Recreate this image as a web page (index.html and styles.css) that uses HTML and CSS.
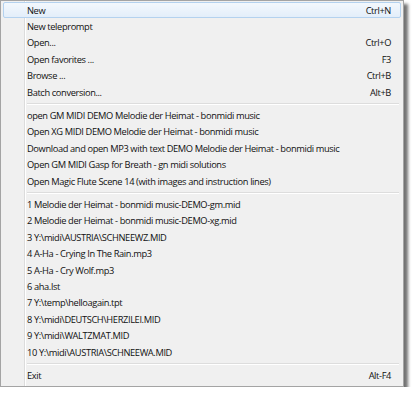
FILE: index.html
```html
<!DOCTYPE html>
<html lang="en">
<head>
    <meta charset="UTF-8">
    <title>File menu</title>
    <link rel="stylesheet" href="styles.css">
</head>
<body>
    <div class="menu">
        <div class="item active"><span class="label">New</span><span class="key">Ctrl+N</span></div>
        <div class="item"><span class="label">New teleprompt</span></div>
        <div class="item"><span class="label">Open...</span><span class="key">Ctrl+O</span></div>
        <div class="item"><span class="label">Open favorites ...</span><span class="key">F3</span></div>
        <div class="item"><span class="label">Browse ...</span><span class="key">Ctrl+B</span></div>
        <div class="item"><span class="label">Batch conversion...</span><span class="key">Alt+B</span></div>
        <div class="sep"></div>
        <div class="item"><span class="label">open GM MIDI DEMO Melodie der Heimat - bonmidi music</span></div>
        <div class="item"><span class="label">Open XG MIDI DEMO Melodie der Heimat - bonmidi music</span></div>
        <div class="item"><span class="label">Download and open MP3 with text DEMO Melodie der Heimat - bonmidi music</span></div>
        <div class="item"><span class="label">Open GM MIDI Gasp for Breath - gn midi solutions</span></div>
        <div class="item"><span class="label">Open Magic Flute Scene 14 (with images and instruction lines)</span></div>
        <div class="sep"></div>
        <div class="item"><span class="label">1 Melodie der Heimat - bonmidi music-DEMO-gm.mid</span></div>
        <div class="item"><span class="label">2 Melodie der Heimat - bonmidi music-DEMO-xg.mid</span></div>
        <div class="item"><span class="label">3 Y:\midi\AUSTRIA\SCHNEEWZ.MID</span></div>
        <div class="item"><span class="label">4 A-Ha - Crying In The Rain.mp3</span></div>
        <div class="item"><span class="label">5 A-Ha - Cry Wolf.mp3</span></div>
        <div class="item"><span class="label">6 aha.lst</span></div>
        <div class="item"><span class="label">7 Y:\temp\helloagain.tpt</span></div>
        <div class="item"><span class="label">8 Y:\midi\DEUTSCH\HERZILEI.MID</span></div>
        <div class="item"><span class="label">9 Y:\midi\WALTZMAT.MID</span></div>
        <div class="item"><span class="label">10 Y:\midi\AUSTRIA\SCHNEEWA.MID</span></div>
        <div class="sep"></div>
        <div class="item"><span class="label">Exit</span><span class="key">Alt-F4</span></div>
    </div>
</body>
</html>
```

FILE: styles.css
```css
* {
    box-sizing: border-box;
}
body {
    margin: 0;
    background: #fff;
    font-family: "Open Sans", "Noto Sans", sans-serif;
}
.menu {
    width: 404px;
    padding: 1px 2px 2px;
    border: 1px solid #a4a4a4;
    background-color: #f0f0f0;
    background-image: linear-gradient(to right, transparent 23px, #dcdcdc 23px, #dcdcdc 24px, #fff 24px, #fff 25px, transparent 25px);
    box-shadow: 4px 4px 3px rgba(0, 0, 0, 0.55);
}
.item {
    display: flex;
    align-items: center;
    height: 16.4px;
    padding: 0 9px 0 23px;
    font-size: 9.3px;
    letter-spacing: -0.38px;
    color: #111;
    border: 1px solid transparent;
    border-radius: 2px;
    white-space: nowrap;
}
.item .label {
    flex: 1;
}
.item .key {
    margin-left: 20px;
}
.item.active {
    border-color: #b4d2ef;
    background: linear-gradient(#f3f8fd, #e3eefa);
}
.sep {
    height: 7px;
    margin-left: 24px;
    margin-right: 2px;
    background: linear-gradient(transparent 3px, #dddddd 3px, #dddddd 4px, #fff 4px, #fff 5px, transparent 5px);
}
```
